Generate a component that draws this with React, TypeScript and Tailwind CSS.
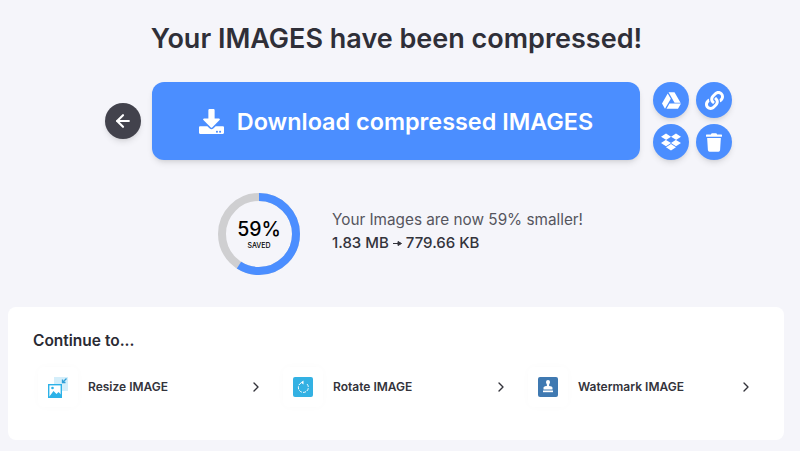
import { FaDownload, FaDropbox, FaGoogleDrive, FaLink, FaTrash } from "react-icons/fa";
import { LuArrowLeft, LuChevronRight } from "react-icons/lu";

function ResizeIcon() {
  return (
    <svg viewBox="0 0 20 21" className="h-[21px] w-5">
      <rect x="6" y="0" width="14" height="14" fill="#d4eefa" />
      <path d="M18.500 1.500 14.500 5.500M14.500 2.500V5.500h3" fill="none" stroke="#2f9fd8" strokeWidth="1.300" />
      <rect x="0.700" y="7.700" width="12.600" height="12.600" fill="#fff" stroke="#2db2e8" strokeWidth="1.400" />
      <path d="M1 20l4.500-6 3 3 2-2 3 3v2z" fill="#2db2e8" />
      <circle cx="4.500" cy="11" r="1.300" fill="#2db2e8" />
    </svg>
  );
}

function RotateIcon() {
  return (
    <svg viewBox="0 0 20 20" className="h-5 w-5">
      <rect width="20" height="20" rx="2" fill="#33b1e3" />
      <path d="M8 6a5 5 0 1 0 6 1" fill="none" stroke="#fff" strokeWidth="1" strokeDasharray="3 1.200" />
      <path d="M10.500 3.500v4L7.800 5.500z" fill="#fff" />
    </svg>
  );
}

function WatermarkIcon() {
  return (
    <svg viewBox="0 0 20 20" className="h-5 w-5">
      <rect width="20" height="20" rx="2" fill="#3f79b1" />
      <path d="M8 5a2 2 0 0 1 4 0c0 1.400-1 2-1 3.500 0 1 3.500.6 3.500 2.200V12.500h-9v-1.800C5.500 9.100 9 9.500 9 8.500 9 7 8 6.400 8 5z" fill="#fff" />
      <rect x="5" y="13.500" width="10" height="1.700" fill="#fff" />
    </svg>
  );
}

const tools = [
  { name: "Resize IMAGE", icon: <ResizeIcon /> },
  { name: "Rotate IMAGE", icon: <RotateIcon /> },
  { name: "Watermark IMAGE", icon: <WatermarkIcon /> },
];

const actions = [
  { key: "drive", icon: <FaGoogleDrive className="h-[19px] w-[19px]" /> },
  { key: "link", icon: <FaLink className="h-[19px] w-[19px]" /> },
  { key: "dropbox", icon: <FaDropbox className="h-[20px] w-[20px]" /> },
  { key: "trash", icon: <FaTrash className="h-[19px] w-[16px]" /> },
];

export default function App() {
  return (
    <div className="h-[451px] w-[800px] overflow-hidden bg-[#f5f5fa] font-['Inter',sans-serif] text-[#33333b]">
      <h1 className="pt-[22px] pr-[7px] text-center text-[27px] leading-[34px] font-semibold text-[#2f2f38]">
        Your IMAGES have been compressed!
      </h1>

      {/* Main download row */}
      <div className="mt-[26px] flex items-center pl-[105px]">
        <div className="flex h-9 w-9 items-center justify-center rounded-full bg-[#42424c] text-white shadow-md">
          <LuArrowLeft className="h-[20px] w-[20px]" strokeWidth={2.6} />
        </div>
        <div className="ml-[11px] flex h-[78px] w-[488px] items-center justify-center gap-[13px] rounded-xl bg-[#4b8eff] text-white shadow-md">
          <FaDownload className="h-[25px] w-[25px]" />
          <span className="pt-[2px] text-[23.4px] font-semibold">Download compressed IMAGES</span>
        </div>
        <div className="ml-[13px] grid grid-cols-[36px_36px] gap-x-[7px] gap-y-[6px]">
          {actions.map((a) => (
            <div key={a.key} className="flex h-9 w-9 items-center justify-center rounded-full bg-[#4b8eff] text-white shadow-md">
              {a.icon}
            </div>
          ))}
        </div>
      </div>

      {/* Savings */}
      <div className="mt-[33px] flex items-center pl-[218px]">
        <div className="relative h-[82px] w-[82px]">
          <svg viewBox="0 0 82 82" className="h-full w-full -rotate-90">
            <circle cx="41" cy="41" r="37" fill="none" stroke="#cfcfd1" strokeWidth="8" />
            <circle cx="41" cy="41" r="37" fill="none" stroke="#4b8eff" strokeWidth="8" strokeDasharray="137.2 232.5" />
          </svg>
          <div className="absolute inset-0 flex flex-col items-center justify-center pb-[2px] text-black">
            <span className="text-[19.5px] leading-[24px] font-medium">59%</span>
            <span className="text-[7px] leading-[9px] font-medium">SAVED</span>
          </div>
        </div>
        <div className="ml-[32px] pb-[5px]">
          <p className="text-[15.3px] leading-[22px] text-[#55555e]">Your Images are now 59% smaller!</p>
          <p className="mt-[1px] flex items-center text-[15px] leading-[22px] font-medium text-[#33333b]">
            1.83 MB
            <svg viewBox="0 0 9 5" className="mx-[4px] h-[5px] w-[9px]">
              <path d="M0 2.500h6M5 .5l3.500 2L5 4.500z" fill="#33333b" stroke="#33333b" strokeWidth="1" />
            </svg>
            779.66 KB
          </p>
        </div>
      </div>

      {/* Continue to */}
      <div className="mx-[8px] mt-[32px] h-[133px] w-[776px] rounded-lg bg-white px-[25px] pt-[24px]">
        <h2 className="text-[15.5px] leading-[20px] font-semibold text-[#2a2a33]">Continue to...</h2>
        <div className="mt-[16px] grid grid-cols-[245px_245px_245px] pl-[5px]">
          {tools.map((t) => (
            <div key={t.name} className="flex h-[40px] items-center">
              <div className="flex h-[40px] w-[40px] items-center justify-center rounded-md shadow-[0_0_8px_rgba(0,0,0,0.02)]">
                {t.icon}
              </div>
              <span className="ml-[10px] text-[12px] font-semibold text-[#33333b]">{t.name}</span>
              <LuChevronRight className="ml-auto mr-[19px] h-[16px] w-[16px] text-[#33333b]" />
            </div>
          ))}
        </div>
      </div>
    </div>
  );
}
